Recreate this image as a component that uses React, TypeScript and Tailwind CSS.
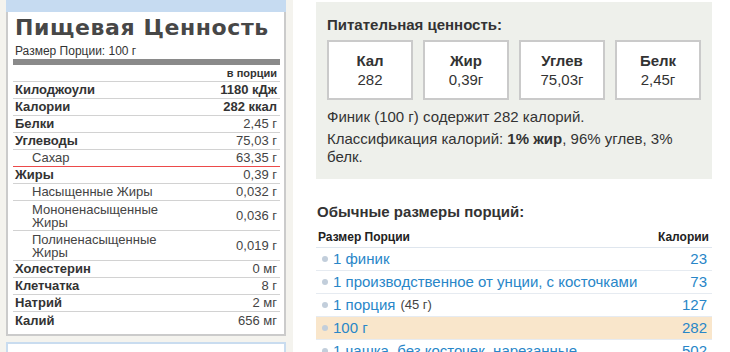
type Row = {
  name: string;
  value: string;
  bold?: boolean;
  boldValue?: boolean;
  sub?: boolean;
  tall?: boolean;
  red?: boolean;
  last?: boolean;
};

const rows: Row[] = [
  { name: "Килоджоули", value: "1180 кДж", bold: true, boldValue: true },
  { name: "Калории", value: "282 ккал", bold: true, boldValue: true },
  { name: "Белки", value: "2,45 г", bold: true },
  { name: "Углеводы", value: "75,03 г", bold: true },
  { name: "Сахар", value: "63,35 г", sub: true, red: true },
  { name: "Жиры", value: "0,39 г", bold: true },
  { name: "Насыщенные Жиры", value: "0,032 г", sub: true },
  { name: "Мононенасыщенные Жиры", value: "0,036 г", sub: true, tall: true },
  { name: "Полиненасыщенные Жиры", value: "0,019 г", sub: true, tall: true },
  { name: "Холестерин", value: "0 мг", bold: true },
  { name: "Клетчатка", value: "8 г", bold: true },
  { name: "Натрий", value: "2 мг", bold: true },
  { name: "Калий", value: "656 мг", bold: true, last: true },
];

const macros = [
  { label: "Кал", value: "282" },
  { label: "Жир", value: "0,39г" },
  { label: "Углев", value: "75,03г" },
  { label: "Белк", value: "2,45г" },
];

const servings = [
  { name: "1 финик", extra: "", cal: "23" },
  { name: "1 производственное от унции, с косточками", extra: "", cal: "73" },
  { name: "1 порция", extra: "(45 г)", cal: "127" },
  { name: "100 г", extra: "", cal: "282", active: true },
  { name: "1 чашка, без косточек, нарезанные", extra: "", cal: "502" },
];

function LabelRow({ row }: { row: Row }) {
  const border = row.last
    ? ""
    : row.red
      ? "border-b border-[#ec4a4a]"
      : "border-b border-[#d2d2d2]";
  return (
    <div
      className={`flex items-center justify-between pl-[2px] pr-[3px] text-[13px] ${
        row.tall ? "h-[30px] leading-[13px]" : "h-[17px] leading-[16px]"
      } ${border}`}
    >
      <span
        className={
          row.sub ? "pl-[17px] text-[#444] w-[150px]" : "font-bold text-[#333]"
        }
      >
        {row.name}
      </span>
      <span className={row.boldValue ? "font-bold text-[#333]" : "text-[#444]"}>
        {row.value}
      </span>
    </div>
  );
}

export default function App() {
  return (
    <div className="flex w-[730px] h-[352px] overflow-hidden bg-white font-['Liberation_Sans',Arial,sans-serif]">
      {/* left sidebar */}
      <div className="flex flex-col w-[293px] shrink-0 bg-[#f4f3ee] pl-[6px] pr-[7px]">
        <div className="h-[12px] bg-[#c6dbf1]" />
        <div className="border-2 border-t-0 border-[#cbcbcb] bg-white pl-[5px] pr-[4px] pt-[3px] pb-[5px]">
          <h1 className="pl-[2px] font-['DejaVu_Sans',sans-serif] text-[22px] leading-[26px] font-bold tracking-[0.6px] text-[#474747]">
            Пищевая Ценность
          </h1>
          <div className="mt-[3px] pl-[2px] text-[12px] leading-[14px] text-[#333]">
            Размер Порции: 100 г
          </div>
          <div className="mt-[1px] h-[6px] bg-[#8a8a8a]" />
          <div className="flex h-[17px] items-center justify-end pr-[3px] border-b border-[#d2d2d2] text-[11px] font-bold text-[#333]">
            в порции
          </div>
          {rows.map((r) => (
            <LabelRow key={r.name} row={r} />
          ))}
        </div>
        <div className="mt-[6px] flex-1 border-2 border-b-0 border-[#c9dcef] bg-white" />
      </div>

      {/* right content */}
      <div className="flex-1 pl-[23px] pr-[18px]">
        <div className="mt-[2px] h-[177px] bg-[#eef0eb] px-[11px] pt-[14px]">
          <h2 className="text-[15px] leading-[18px] font-bold text-[#333]">
            Питательная ценность:
          </h2>
          <div className="mt-[6px] flex gap-[10px]">
            {macros.map((m) => (
              <div
                key={m.label}
                className="flex flex-col items-center justify-center w-[86px] h-[60px] border-2 border-[#cacaca] bg-white text-[15px] leading-[19px] text-[#333]"
              >
                <span className="font-bold">{m.label}</span>
                <span>{m.value}</span>
              </div>
            ))}
          </div>
          <p className="mt-[7px] text-[15px] leading-[19px] text-[#333]">
            Финик (100 г) содержит 282 калорий.
          </p>
          <p className="mt-[4px] text-[15px] leading-[18px] text-[#333]">
            Классификация калорий: <b>1% жир</b>, 96% углев, 3% белк.
          </p>
        </div>

        <h2 className="mt-[23px] pl-[1px] text-[15px] leading-[20px] font-bold text-[#333]">
          Обычные размеры порций:
        </h2>
        <div className="flex justify-between pt-[8px] pb-[3px] pl-[2px] pr-[3px] border-b border-[#dfe6ee] text-[12px] leading-[14px] font-bold text-[#222]">
          <span>Размер Порции</span>
          <span>Калории</span>
        </div>
        {servings.map((s) => (
          <div
            key={s.name}
            className={`flex items-center justify-between h-[23px] pl-[6px] pr-[5px] border-b border-[#e6ebf1] text-[15px] text-[#2886c8] ${
              s.active ? "bg-[#f9e6cb]" : ""
            }`}
          >
            <div className="flex items-center gap-[5px]">
              <span className="w-[6px] h-[6px] rounded-full bg-[#c2cedb]" />
              <span>{s.name}</span>
              {s.extra && (
                <span className="text-[13px] text-[#444]">{s.extra}</span>
              )}
            </div>
            <span>{s.cal}</span>
          </div>
        ))}
      </div>
    </div>
  );
}
